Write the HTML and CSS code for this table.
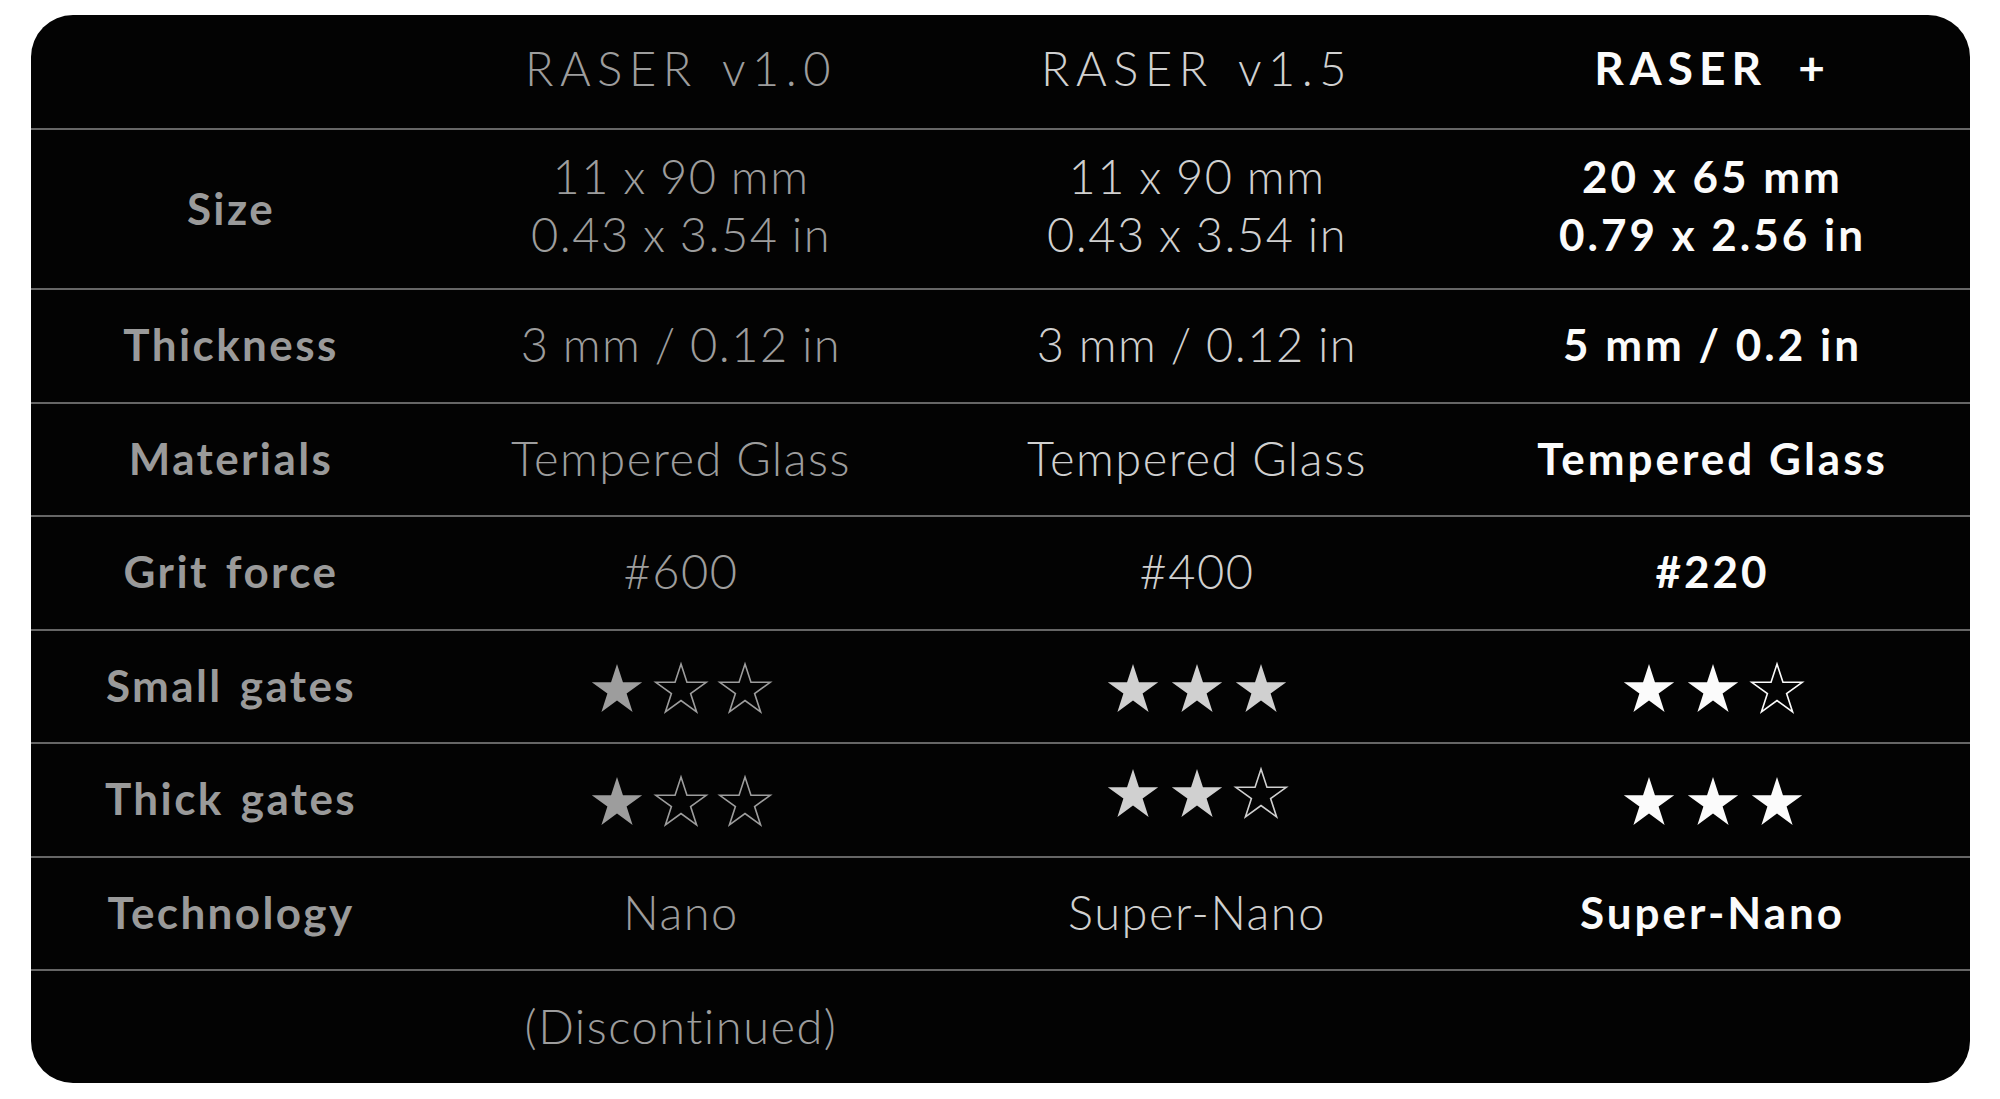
FILE: index.html
```html
<!DOCTYPE html>
<html lang="en">
<head>
<meta charset="utf-8">
<title>RASER comparison</title>
<link rel="stylesheet" href="styles.css">
</head>
<body>
<svg class="defs" width="0" height="0" aria-hidden="true">
  <defs>
    <polygon id="star" points="25,0 30.95,18.3 50.2,18.3 34.6,29.6 40.6,47.9 25,36.6 9.4,47.9 15.4,29.6 -0.2,18.3 19.05,18.3"/>
  </defs>
</svg>
<div class="card">
  <div class="row head">
    <div class="cell label"></div>
    <div class="cell v10 title">RASER v1.0</div>
    <div class="cell v15 title">RASER v1.5</div>
    <div class="cell plus title">RASER +</div>
  </div>
  <div class="row size">
    <div class="cell label">Size</div>
    <div class="cell v10 val two"><span>11 x 90 mm</span><span>0.43 x 3.54 in</span></div>
    <div class="cell v15 val two"><span>11 x 90 mm</span><span>0.43 x 3.54 in</span></div>
    <div class="cell plus val two"><span>20 x 65 mm</span><span>0.79 x 2.56 in</span></div>
  </div>
  <div class="row">
    <div class="cell label">Thickness</div>
    <div class="cell v10 val">3 mm / 0.12 in</div>
    <div class="cell v15 val">3 mm / 0.12 in</div>
    <div class="cell plus val">5 mm / 0.2 in</div>
  </div>
  <div class="row">
    <div class="cell label">Materials</div>
    <div class="cell v10 val">Tempered Glass</div>
    <div class="cell v15 val">Tempered Glass</div>
    <div class="cell plus val">Tempered Glass</div>
  </div>
  <div class="row">
    <div class="cell label">Grit force</div>
    <div class="cell v10 val">#600</div>
    <div class="cell v15 val">#400</div>
    <div class="cell plus val">#220</div>
  </div>
  <div class="row">
    <div class="cell label">Small gates</div>
    <div class="cell v10 stars">
      <svg class="star full" viewBox="-1 -1 52 50"><use href="#star"/></svg>
      <svg class="star empty" viewBox="-1 -1 52 50"><use href="#star"/></svg>
      <svg class="star empty" viewBox="-1 -1 52 50"><use href="#star"/></svg>
    </div>
    <div class="cell v15 stars">
      <svg class="star full" viewBox="-1 -1 52 50"><use href="#star"/></svg>
      <svg class="star full" viewBox="-1 -1 52 50"><use href="#star"/></svg>
      <svg class="star full" viewBox="-1 -1 52 50"><use href="#star"/></svg>
    </div>
    <div class="cell plus stars">
      <svg class="star full" viewBox="-1 -1 52 50"><use href="#star"/></svg>
      <svg class="star full" viewBox="-1 -1 52 50"><use href="#star"/></svg>
      <svg class="star empty" viewBox="-1 -1 52 50"><use href="#star"/></svg>
    </div>
  </div>
  <div class="row">
    <div class="cell label">Thick gates</div>
    <div class="cell v10 stars">
      <svg class="star full" viewBox="-1 -1 52 50"><use href="#star"/></svg>
      <svg class="star empty" viewBox="-1 -1 52 50"><use href="#star"/></svg>
      <svg class="star empty" viewBox="-1 -1 52 50"><use href="#star"/></svg>
    </div>
    <div class="cell v15 stars raised">
      <svg class="star full" viewBox="-1 -1 52 50"><use href="#star"/></svg>
      <svg class="star full" viewBox="-1 -1 52 50"><use href="#star"/></svg>
      <svg class="star empty" viewBox="-1 -1 52 50"><use href="#star"/></svg>
    </div>
    <div class="cell plus stars">
      <svg class="star full" viewBox="-1 -1 52 50"><use href="#star"/></svg>
      <svg class="star full" viewBox="-1 -1 52 50"><use href="#star"/></svg>
      <svg class="star full" viewBox="-1 -1 52 50"><use href="#star"/></svg>
    </div>
  </div>
  <div class="row">
    <div class="cell label">Technology</div>
    <div class="cell v10 val">Nano</div>
    <div class="cell v15 val">Super-Nano</div>
    <div class="cell plus val">Super-Nano</div>
  </div>
  <div class="row last">
    <div class="cell label"></div>
    <div class="cell v10 val">(Discontinued)</div>
    <div class="cell v15 val"></div>
    <div class="cell plus val"></div>
  </div>
</div>
</body>
</html>
```

FILE: styles.css
```css
html, body {
  margin: 0;
  background: #ffffff;
}

body {
  padding: 15px 30px 0 31px;
  font-family: Lato, "Liberation Sans", sans-serif;
}

.defs {
  position: absolute;
  width: 0;
  height: 0;
}

.card {
  width: 1939px;
  height: 1068px;
  background: #030303;
  border-radius: 42px;
  overflow: hidden;
  display: flex;
  flex-direction: column;
}

.row {
  display: grid;
  grid-template-columns: 392px 516px 516px 515px;
  height: 113.5px;
  box-sizing: border-box;
  border-top: 2px solid #666666;
}

.row.head {
  height: 113px;
  border-top: none;
}

.row.size {
  height: 160px;
}

.row.last {
  height: 114px;
}

.cell {
  display: flex;
  align-items: center;
  justify-content: center;
  white-space: nowrap;
  padding-bottom: 3px;
}

.label {
  padding-left: 8px;
  color: #9a9a9a;
  font-weight: 700;
  font-size: 44px;
  letter-spacing: 2.4px;
  word-spacing: 4px;
}

.head .cell {
  padding-bottom: 8px;
}

.title {
  font-size: 47px;
  font-weight: 300;
  letter-spacing: 6.5px;
  word-spacing: 6px;
}

.title.plus {
  font-weight: 700;
  font-size: 46px;
  letter-spacing: 6px;
  word-spacing: 14px;
}

.val {
  font-size: 47px;
  font-weight: 300;
  letter-spacing: 1.5px;
  word-spacing: -1px;
}

.val.plus {
  font-size: 44px;
  font-weight: 700;
  letter-spacing: 3px;
  word-spacing: 0;
}

.size .two {
  flex-direction: column;
  line-height: 58px;
  padding-bottom: 8px;
}

.v10 { color: #9d9d9d; }
.v15 { color: #d0d0d0; }
.plus { color: #fbfbfb; }

.stars {
  gap: 14px;
  padding-top: 3px;
  padding-bottom: 0;
}

.stars.raised {
  padding-top: 0;
  padding-bottom: 14px;
}

.star {
  width: 52px;
  height: 50px;
  margin: 0 -1px;
  overflow: visible;
}

.star.full {
  fill: currentColor;
  stroke: none;
}

.star.empty {
  fill: none;
  stroke: currentColor;
  stroke-width: 1.6;
  stroke-linejoin: miter;
}
```
